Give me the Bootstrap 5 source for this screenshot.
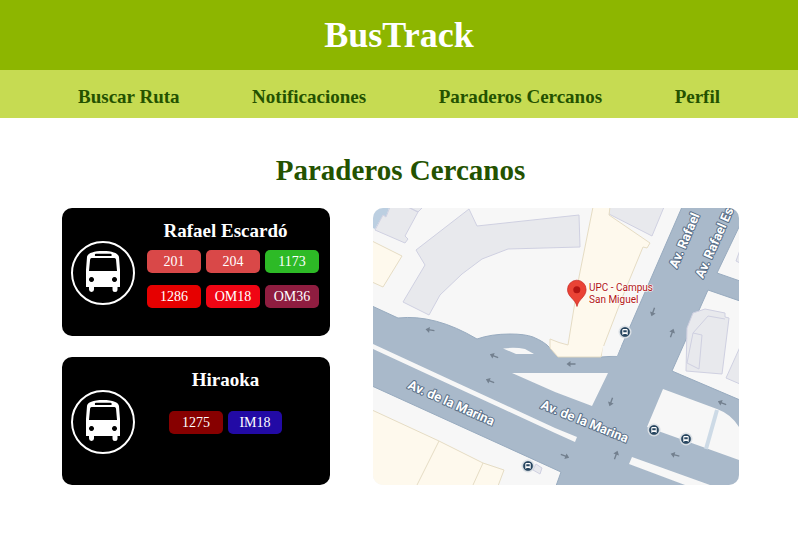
<!DOCTYPE html>
<html lang="es">
<head>
<meta charset="utf-8">
<meta name="viewport" content="width=device-width, initial-scale=1">
<title>BusTrack</title>
<link href="https://cdn.jsdelivr.net/npm/bootstrap@5.3.0/dist/css/bootstrap.min.css" rel="stylesheet">
<style>
  body { font-family: "Liberation Serif", "Times New Roman", serif; background: #fff; }
  .top-bar { background: #8db600; min-height: 70px; }
  .brand-title { font-size: 36px; line-height: 44px; }
  .menu-bar { background: #c6db52; min-height: 48px; padding: 6px 78px 0; }
  .menu-bar a { color: #245200; font-size: 19px; line-height: 24px; }
  .page-body { padding: 36px 59px 48px 62px; }
  .page-title { color: #245200; font-size: 29px; line-height: 32px; margin-bottom: 22px; }
  .stops-layout { grid-template-columns: minmax(0, 268fr) minmax(0, 366fr); gap: 43px; }
  .stop-list { gap: 21px; }
  .stop-card { background: #000; border-radius: 10px; min-height: 128px; padding: 11px 11px 9px 9px; gap: 12px; }
  .stop-icon { width: 64px; height: 64px; }
  .stop-name { font-size: 19px; line-height: 24px; margin-bottom: 7px; padding-right: 15px; }
  .route-list { gap: 12px 5px; }
  .route-list-single { margin-top: 19px; padding-right: 15px; }
  .route-btn { width: 54px; height: 23px; border-radius: 5px; font-size: 14px; line-height: 24px; }
  .r-coral { background: #d94848; }
  .r-green { background: #2dba26; }
  .r-red { background: #e60000; }
  .r-scarlet { background: #f00514; }
  .r-wine { background: #8f1d40; }
  .r-maroon { background: #870000; }
  .r-blue { background: #220aa5; }
  .map-box { border-radius: 10px; background: #f7f7f7; }
  .map-box text { font-family: Roboto, sans-serif; }
  .land { fill: #f7f7f7; }
  .road { fill: #a9b9ca; stroke: #98abbf; }
  .block { fill: #e8e9ed; stroke: #cfd0e1; }
  .plot { fill: #fef9ed; stroke: #e5dcc4; }
  .street-name { font-size: 13px; font-weight: 700; fill: #fff; stroke: #596f88; stroke-width: 2px; paint-order: stroke; stroke-linejoin: round; }
  .place-name { font-size: 10px; fill: #b31412; stroke: #fff; stroke-width: 1px; paint-order: stroke; }
  @media (max-width: 600px) {
    .menu-bar { padding: 8px 16px; }
    .page-body { padding: 24px 16px; }
    .stops-layout { grid-template-columns: minmax(0, 1fr); gap: 21px; }
  }
</style>
</head>
<body>
<svg class="d-none" aria-hidden="true">
  <symbol id="bus" viewBox="0 0 64 64">
    <circle cx="32" cy="32" r="31" fill="none" stroke="#fff" stroke-width="2"/>
    <path fill="#fff" fill-rule="evenodd" d="M15 46V29l1-13c.3-3.500 6-6 16-6s15.500 2.500 16 6l1 13v17H46.500v2.500a2.500 2.500 0 0 1-5 0v-2.500H23v2.500a2.500 2.500 0 0 1-5 0v-2.500zM20.500 17q-1.200 0-1.400 1.500L18 30h28l-1-11.500Q44.700 17 43.500 17zM25 12.700a1.200 1.200 0 0 0 0 2.400h14.500a1.200 1.200 0 0 0 0-2.400zM20.500 36a2.500 2.500 0 1 0 .01 0zM43.500 36a2.500 2.500 0 1 0 .01 0z"/>
  </symbol>
</svg>

<header class="top-bar d-flex align-items-center justify-content-center text-white">
  <h1 class="brand-title fw-bold mb-0">BusTrack</h1>
</header>
<nav class="menu-bar d-flex flex-wrap align-items-center justify-content-between" aria-label="Principal">
  <a class="fw-bold text-decoration-none" href="#ruta">Buscar Ruta</a>
  <a class="fw-bold text-decoration-none" href="#notificaciones">Notificaciones</a>
  <a class="fw-bold text-decoration-none" href="#paraderos">Paraderos Cercanos</a>
  <a class="fw-bold text-decoration-none" href="#perfil">Perfil</a>
</nav>

<main class="page-body" id="paraderos">
  <h2 class="page-title fw-bold text-center">Paraderos Cercanos</h2>
  <div class="stops-layout d-grid">
    <div class="stop-list d-flex flex-column">
      <section class="stop-card d-flex text-white">
        <svg class="stop-icon flex-shrink-0 align-self-center" aria-hidden="true"><use href="#bus"/></svg>
        <div class="flex-grow-1 text-center">
          <h3 class="stop-name fw-bold">Rafael Escardó</h3>
          <div class="route-list d-flex flex-wrap justify-content-center">
            <button type="button" class="route-btn r-coral border-0 p-0 text-white">201</button>
            <button type="button" class="route-btn r-coral border-0 p-0 text-white">204</button>
            <button type="button" class="route-btn r-green border-0 p-0 text-white">1173</button>
            <button type="button" class="route-btn r-red border-0 p-0 text-white">1286</button>
            <button type="button" class="route-btn r-scarlet border-0 p-0 text-white">OM18</button>
            <button type="button" class="route-btn r-wine border-0 p-0 text-white">OM36</button>
          </div>
        </div>
      </section>
      <section class="stop-card d-flex text-white">
        <svg class="stop-icon flex-shrink-0 align-self-center" aria-hidden="true"><use href="#bus"/></svg>
        <div class="flex-grow-1 text-center">
          <h3 class="stop-name fw-bold">Hiraoka</h3>
          <div class="route-list route-list-single d-flex flex-wrap justify-content-center">
            <button type="button" class="route-btn r-maroon border-0 p-0 text-white">1275</button>
            <button type="button" class="route-btn r-blue border-0 p-0 text-white">IM18</button>
          </div>
        </div>
      </section>
    </div>

    <div class="map-box overflow-hidden align-self-start">
      <svg class="d-block w-100" viewBox="0 0 366 277" role="img" aria-label="Mapa de paraderos cercanos">
        <defs>
          <path id="arrow" d="M-4.500 0L-.5-3V-.7H4.500V.7H-.5V3z" fill="#73808f"/>
          <g id="stop">
            <circle r="6.500" fill="#d9dee4"/><circle r="5.300" fill="#284660" stroke="#fff" stroke-width=".6"/>
            <path d="M-2.700 2.800V-1.800Q-2.700-2.900-1.600-2.900H1.600Q2.700-2.900 2.700-1.800V2.800H1.700V2H-1.700V2.800z" fill="#fff"/>
            <path d="M-1.700-1.800H1.700V.2H-1.700z" fill="#284660"/>
          </g>
        </defs>
        <rect class="land" width="366" height="277"/>
        <path d="M0 0H16L13 9 10 7 2 21 0 20z" fill="#bccfe1"/>
        <path class="block" d="M17-1H35L45 4 32 28l3 3-3 4L2 22 10 7l3 2zM35-1L45 4 49 0V-1z"/>
        <path class="block" d="M96 1l8 17L206 7l1 32-72 2-26 10-20 15-22 21-11 20-26-13L52 57 43 42z"/>
        <path class="plot" d="M-1 33L29 48 10 79-1 74z"/>
        <path class="block" d="M236-1v7l43 22 12-29z"/>

        <path class="road" d="M-1 98L25 110Q62 106 104 131Q118 126 137 126Q152 126 160 129Q172 134 177 140L185 149H228L244 148 249 137 309-1H367V17L344 65 367 73V93L335 82 299 163 367 192V278H183L188 264-1 178z"/>
        <path class="plot" d="M220-1h17l-1 8 41 28-3 5-4-1-19 46-20 52-3 12H185l-8-9v-9q9 4 18 6l11-68z"/>
        <path class="land" d="M230 138h18l-4 10-15-1z"/>
        <path class="land" d="M130 140.500Q142 139 152 141L161 146H143zM139 165H235L219 198 182 184z"/>
        <path class="land" d="M0 136L80 173 130 196 182 220l22 9-2 5-20-9-52-24-50-23L0 141zM290 181l54 20q14 5 22 18v33l-92-33zM259 249l78 28H312L256 256z"/>
        <path d="M344 202L333 241" stroke="#cddae6" stroke-width="4"/>

        <path class="plot" d="M-1 202L66 233 110 255l21 7-6 16H-1zM66 233L44 277M110 255L100 277"/>
        <path class="block" d="M163 256l6 4-2 6-7-4z"/>
        <path class="block" d="M313 163l1-43 6-15 12-4 20 4v4l4 1-7 56z"/>
        <path d="M314 155l12 6 3-34-9-2 15-17 17 3M320 125l-6 30" fill="none" stroke="#cfd0e1"/>
        <path class="block" d="M367 139L353 170l14 6zM367 42l-4 11 4 2z"/>

        <use href="#arrow" transform="translate(57 122) rotate(8)"/>
        <use href="#arrow" transform="translate(121 148) rotate(22)"/>
        <use href="#arrow" transform="translate(117 173) rotate(22)"/>
        <use href="#arrow" transform="translate(198 156)"/>
        <use href="#arrow" transform="translate(238 194) rotate(-70)"/>
        <use href="#arrow" transform="translate(192 248) rotate(202)"/>
        <use href="#arrow" transform="translate(243 247) rotate(110)"/>
        <use href="#arrow" transform="translate(302 247) rotate(15)"/>
        <use href="#arrow" transform="translate(349 195) rotate(22)"/>
        <use href="#arrow" transform="translate(280 104) rotate(-70)"/>
        <use href="#arrow" transform="translate(299 125) rotate(110)"/>

        <text class="street-name" transform="translate(34 180) rotate(24)">Av. de la Marina</text>
        <text class="street-name" transform="translate(167 200) rotate(22)">Av. de la Marina</text>
        <text class="street-name" transform="translate(304 61) rotate(-67)">Av. Rafael</text>
        <text class="street-name" transform="translate(330 71) rotate(-66)">Av. Rafael Es</text>

        <use href="#stop" x="252" y="124"/>
        <use href="#stop" x="281" y="222"/>
        <use href="#stop" x="313" y="231"/>
        <use href="#stop" x="155" y="258"/>

        <path d="M204 98.500C202.500 91 194.500 89 194.500 81.500a9.300 9.300 0 0 1 18.600 0C213.100 89 205.500 91 204 98.500z" fill="#ea4335" stroke="#c5221f" stroke-width=".7"/>
        <circle cx="203.800" cy="81.700" r="3.500" fill="#b31412"/>
        <text class="place-name" x="216" y="83">UPC - Campus</text>
        <text class="place-name" x="216" y="95">San Miguel</text>
      </svg>
    </div>
  </div>
</main>
<script src="https://cdn.jsdelivr.net/npm/bootstrap@5.3.0/dist/js/bootstrap.bundle.min.js"></script>
</body>
</html>
